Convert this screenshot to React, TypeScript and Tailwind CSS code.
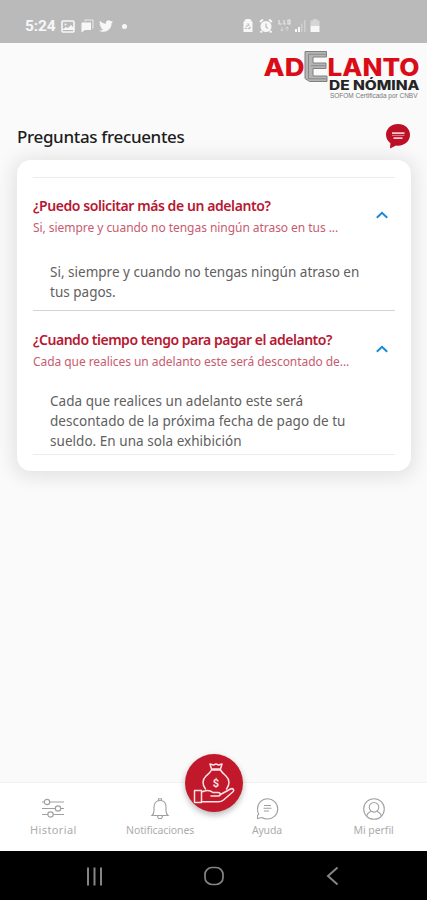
import React from "react";
import { FaTwitter } from "react-icons/fa";

function StatusBar() {
  return (
    <div className="flex h-[43px] shrink-0 items-start bg-[#bababa] pl-[25px] pt-[18px] text-[#f7f7f7]">
      <span className="w-[31px] font-[Roboto] text-[15.5px] font-bold leading-[17px] tracking-[-0.1px]">5:24</span>
      <svg className="ml-[5px] mt-[2px]" width="14" height="13" viewBox="0 0 14 13">
        <rect x="1" y="1" width="12" height="11" rx="1" fill="none" stroke="currentColor" strokeWidth="1.6" />
        <path d="M2 9l3-2 2 1 3-3 3 3v2H2z" fill="currentColor" />
        <circle cx="4.5" cy="4.5" r="1" fill="currentColor" />
      </svg>
      <svg className="ml-[5px] mt-[1px]" width="14" height="14" viewBox="0 0 14 14">
        <path d="M5 2.500V1h8v8h-1" fill="none" stroke="currentColor" strokeWidth="1" opacity=".8" />
        <path d="M2 3.500h9v7.500H5L1.500 13.500V4z" fill="currentColor" />
      </svg>
      <FaTwitter className="ml-[5px] mt-px" size={14} />
      <span className="ml-[9px] mt-[6px] size-[5px] rounded-full bg-[#f7f7f7]" />
      <div className="ml-[116px] mt-px flex items-start">
        <svg width="10" height="14" viewBox="0 0 10 14">
          <path d="M3 0h4L9.500 3V13h-9V3z" fill="currentColor" />
          <path d="M5 5l2.500 4.500h-5z" fill="none" stroke="#bababa" strokeWidth="1.2" strokeDasharray="2 1" />
        </svg>
        <svg className="ml-[6px]" width="14" height="14" viewBox="0 0 14 14">
          <circle cx="7" cy="7.500" r="5.500" fill="currentColor" />
          <path d="M1 3l3-2.500M13 3l-3-2.500M3 12l-1.500 1.500M11 12l1.500 1.500" stroke="currentColor" strokeWidth="2" />
          <path d="M7 4.500v3.500l2 1.500" fill="none" stroke="#bababa" strokeWidth="1.2" />
        </svg>
        <svg className="ml-[5px]" width="14" height="14" viewBox="0 0 14 14" fill="none" stroke="currentColor">
          <path d="M1 1v4h3M6 1v4h2M10 1v4h2V1z" strokeWidth="1.1" opacity=".8" />
          <path d="M4 8v4M2.500 10.500L4 12l1.500-1.500M9 12V8M7.500 9.500L9 8l1.500 1.500" opacity=".45" />
        </svg>
        <svg className="ml-[2px]" width="12" height="14" viewBox="0 0 12 14" fill="currentColor">
          <path d="M1 10h2v3H1zM4 8h2v5H4z" />
          <path d="M7 4.500h1.500V13H7zM10 1h1.500v12H10z" opacity=".35" />
        </svg>
        <svg className="ml-[4px]" width="10" height="14" viewBox="0 0 10 14" fill="currentColor">
          <path d="M3 0h4v1.500h2.500V6h-9V1.500H3z" opacity=".45" />
          <path d="M.5 6.500h9V13h-9z" />
        </svg>
      </div>
    </div>
  );
}

function Logo() {
  return (
    <svg className="overflow-visible" width="160" height="58" viewBox="262 48 160 58" role="img" aria-label="Adelanto de Nómina">
      <g fontFamily="Inter, sans-serif" fontWeight="800" fontSize="24" fill="#dc0b18">
        <text x="263.500" y="75.500" textLength="41" lengthAdjust="spacingAndGlyphs">AD</text>
        <text x="327.500" y="75.500" textLength="92" lengthAdjust="spacingAndGlyphs">LANTO</text>
      </g>
      <path d="M305 51.500h21.500v5.500H313v6h13v5.500H313v7.500h14v5.500h-17.500l-4.500-3z" fill="#b4b4b4" stroke="#808080" strokeWidth="1" strokeLinejoin="round" />
      <path d="M308.500 54.300v24.700M308.500 54.300h17.500M311 65.700h14.500M308.500 78.800h18" fill="none" stroke="#858585" strokeWidth=".9" />
      <text x="329" y="90.300" textLength="90.500" lengthAdjust="spacingAndGlyphs" fontFamily="Inter, sans-serif" fontWeight="800" fontSize="12.500" fill="#252525">DE NÓMINA</text>
      <text x="330" y="98.300" textLength="87.500" lengthAdjust="spacingAndGlyphs" fontFamily="Liberation Sans, sans-serif" fontSize="7" fill="#777">SOFOM Certificada por CNBV</text>
    </svg>
  );
}

function Chevron() {
  return (
    <svg className="mr-[6px] mt-[16px]" width="14" height="10" viewBox="0 0 14 10">
      <path d="M1.800 7.800L7 2.800l5.200 5" fill="none" stroke="#1688d8" strokeWidth="1.900" />
    </svg>
  );
}

function App() {
  return (
    <div className="flex h-[900px] w-[427px] flex-col overflow-hidden bg-[#fafafa] font-['Noto_Sans',sans-serif]">
      <StatusBar />
      <header className="flex h-[72px] shrink-0 justify-end pr-[5px] pt-[5px]">
        <Logo />
      </header>
      <main className="flex flex-1 flex-col px-[17px] pr-[16px]">
        <div className="flex h-[45px] shrink-0 items-start justify-between">
          <h1 className="whitespace-nowrap pt-[10px] text-[17px] font-medium leading-[24px] tracking-[-0.35px] text-[#1d1d1d]">Preguntas frecuentes</h1>
          <svg className="mt-[8px]" width="26" height="27" viewBox="0 0 26 27">
            <path d="M13 1C6.300 1 1 5.700 1 11.800c0 3.400 1.700 6.400 4.400 8.400L5 25.500l6-3c.7.100 1.300.200 2 .200 6.900 0 12-4.800 12-10.900S19.900 1 13 1z" fill="#bd1026" />
            <path d="M7 10.200h12.500M8.500 15.200h9" stroke="#f6c9cf" strokeWidth="1.700" />
            <path d="M7 12.400h12.500" stroke="#f6c9cf" strokeWidth=".6" />
          </svg>
        </div>
        <section className="flex h-[311px] shrink-0 flex-col rounded-[14px] bg-white px-[16px] pt-[17px] shadow-[0_2px_18px_5px_rgba(0,0,0,0.09)]">
          <article className="flex h-[134px] flex-col border-b border-t border-b-[#d4d4d4] border-t-[#ececec]">
            <div className="flex h-[72px] items-start justify-between pt-[16px]">
              <div className="whitespace-nowrap">
                <h2 className="text-[14px] font-semibold leading-[24px] tracking-[-0.42px] text-[#b71832]">¿Puedo solicitar más de un adelanto?</h2>
                <p className="text-[12px] leading-[20px] tracking-[-0.05px] text-[#c85c70]">Si, siempre y cuando no tengas ningún atraso en tus ...</p>
              </div>
              <Chevron />
            </div>
            <p className="whitespace-nowrap pl-[17px] pt-[12px] text-[13.5px] leading-[20px] tracking-[0.01px] text-[#606060]">
              Si, siempre y cuando no tengas ningún atraso en<br />tus pagos.
            </p>
          </article>
          <article className="flex h-[144px] flex-col border-b border-b-[#ececec]">
            <div className="flex h-[64px] items-start justify-between pt-[17px]">
              <div className="whitespace-nowrap">
                <h2 className="text-[14px] font-semibold leading-[24px] tracking-[-0.47px] text-[#b71832]">¿Cuando tiempo tengo para pagar el adelanto?</h2>
                <p className="text-[12px] leading-[20px] tracking-[-0.06px] text-[#c85c70]">Cada que realices un adelanto este será descontado de...</p>
              </div>
              <Chevron />
            </div>
            <p className="whitespace-nowrap pl-[17px] pt-[16px] text-[13.5px] leading-[20px] tracking-[0.04px] text-[#606060]">
              Cada que realices un adelanto este será<br />descontado de la próxima fecha de pago de tu<br />sueldo. En una sola exhibición
            </p>
          </article>
        </section>
      </main>
      <nav className="relative grid h-[69px] shrink-0 grid-cols-4 border-t border-[#f2f2f2] bg-white text-[10.5px] leading-[16px] text-[#acacac]">
        <div className="flex flex-col items-center pt-[14px]">
          <svg width="24" height="24" viewBox="0 0 24 24" fill="none" stroke="#a0a0a0" strokeWidth="1.200">
            <path d="M1 5h2.500M9 5h14M1 11.500h13M20 11.500h3M1 17.500h5.500M12 17.500h11" />
            <circle cx="6" cy="5" r="2.700" /><circle cx="17" cy="11.500" r="2.700" /><circle cx="9.500" cy="17.500" r="2.700" />
          </svg>
          <span className="mt-px text-[11px] tracking-[0.4px]">Historial</span>
        </div>
        <div className="flex flex-col items-center pt-[14px]">
          <svg width="20" height="24" viewBox="0 0 20 24" fill="none" stroke="#a0a0a0" strokeWidth="1.100">
            <path d="M8.500 3.500V1.800h3v1.700M2 18.500c1.800-1.700 2-3 2-5V10c0-4 2.200-6.500 6-6.500s6 2.500 6 6.500v3.500c0 2 .2 3.300 2 5z" />
            <path d="M7.500 19c.3 2 1.200 2.800 2.500 2.800s2.200-.8 2.500-2.800" />
          </svg>
          <span className="mt-px tracking-[-0.1px]">Notificaciones</span>
        </div>
        <div className="flex flex-col items-center pt-[14px]">
          <svg width="24" height="24" viewBox="0 0 24 24" fill="none" stroke="#a0a0a0" strokeWidth="1.100">
            <path d="M2.500 21.500v-3.300l1.300-.8C3 15.800 2.500 14 2.500 12 2.500 6.200 7 1.800 12.500 1.800S22.700 6.200 22.700 12s-4.500 10-10.200 10c-2.200 0-4.200-.5-5.700-1.500z" />
            <path d="M9 8.500h7M8.500 11.200h8M9 14h5" />
          </svg>
          <span className="mt-px tracking-[-0.2px]">Ayuda</span>
        </div>
        <div className="flex flex-col items-center pt-[14px]">
          <svg width="24" height="24" viewBox="0 0 24 24" fill="none" stroke="#a0a0a0" strokeWidth="1.100">
            <circle cx="12" cy="12" r="10.300" />
            <circle cx="12" cy="10.300" r="4.800" />
            <path d="M4.500 19c.8-2.300 2.300-3.800 4.500-4.800M15 14.200c2.200 1 3.700 2.500 4.500 4.800" />
          </svg>
          <span className="mt-px tracking-[-0.05px]">Mi perfil</span>
        </div>
        <div className="absolute left-[185px] top-[-29px] size-[58px] rounded-full bg-[#c1182b] shadow-[0_3px_6px_rgba(0,0,0,0.28)]">
          <svg width="58" height="58" viewBox="0 0 58 58" fill="none" stroke="#fbe4e6" strokeWidth="1.500" strokeLinejoin="round" strokeLinecap="round">
            <path d="M9.500 36.500h7v12h-7zM16.500 38c5-2.500 8-2.500 11.500.5h5c3 0 3 3.500 0 3.500H26" />
            <path d="M35.500 40.500l10-5.500c2.500-1.200 4.200 1 2.500 2.800L38.500 46c-1.500 1.300-3 1.800-5 1.800h-17" />
            <path d="M20.500 35c-3.500-4-3.200-9.500.5-13 2.500-2.200 4.300-3.500 5.500-6h9c1.500 2.500 3.200 3.800 5.500 6 3.700 3.500 4 9 .5 13M26.500 15l-1.500-5 3.500 1L31 10l2.500 1 3.500-1-1.500 5z" />
            <text x="31" y="33" textAnchor="middle" fontFamily="Roboto, sans-serif" fontSize="11" fontWeight="700" fill="#fbe4e6" stroke="none">$</text>
          </svg>
        </div>
      </nav>
      <footer className="flex h-[49px] shrink-0 items-start bg-black pt-[15px]">
        <svg width="427" height="20" viewBox="0 0 427 20" fill="none" stroke="#858585" strokeWidth="2">
          <path d="M88 1.500v18M94.500 1.500v18M101 1.500v18" />
          <rect x="205" y="1.500" width="18" height="17" rx="7" strokeWidth="1.700" />
          <path d="M337.500 1.500L328 10l9.500 8.500" />
        </svg>
      </footer>
    </div>
  );
}

export default App;
